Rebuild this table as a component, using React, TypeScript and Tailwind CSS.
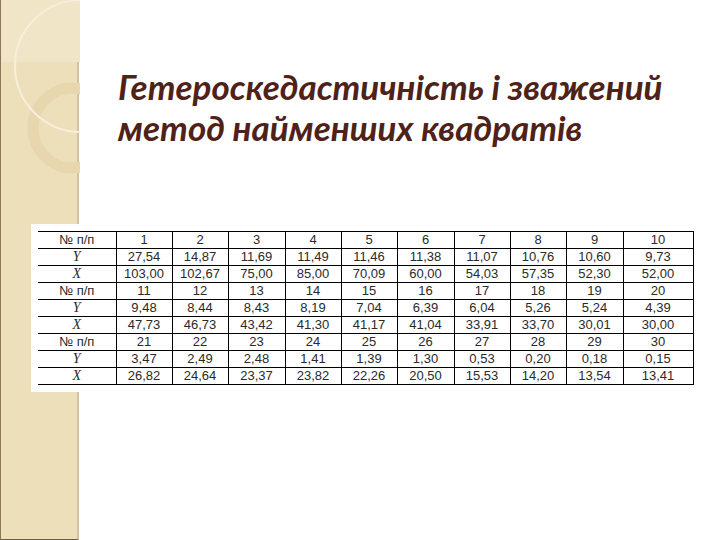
import React from "react";

const rows: { label: string; italic: boolean; cells: string[] }[] = [
  { label: "№ п/п", italic: false, cells: ["1", "2", "3", "4", "5", "6", "7", "8", "9", "10"] },
  { label: "Y", italic: true, cells: ["27,54", "14,87", "11,69", "11,49", "11,46", "11,38", "11,07", "10,76", "10,60", "9,73"] },
  { label: "X", italic: true, cells: ["103,00", "102,67", "75,00", "85,00", "70,09", "60,00", "54,03", "57,35", "52,30", "52,00"] },
  { label: "№ п/п", italic: false, cells: ["11", "12", "13", "14", "15", "16", "17", "18", "19", "20"] },
  { label: "Y", italic: true, cells: ["9,48", "8,44", "8,43", "8,19", "7,04", "6,39", "6,04", "5,26", "5,24", "4,39"] },
  { label: "X", italic: true, cells: ["47,73", "46,73", "43,42", "41,30", "41,17", "41,04", "33,91", "33,70", "30,01", "30,00"] },
  { label: "№ п/п", italic: false, cells: ["21", "22", "23", "24", "25", "26", "27", "28", "29", "30"] },
  { label: "Y", italic: true, cells: ["3,47", "2,49", "2,48", "1,41", "1,39", "1,30", "0,53", "0,20", "0,18", "0,15"] },
  { label: "X", italic: true, cells: ["26,82", "24,64", "23,37", "23,82", "22,26", "20,50", "15,53", "14,20", "13,54", "13,41"] },
];

const colW = [78, 56, 56, 57, 56, 56, 57, 56, 56, 57, 70];

export default function App() {
  return (
    <div className="relative w-[720px] h-[540px] bg-white overflow-hidden">
      {/* decorative side strip */}
      <div className="absolute left-0 top-0 w-[79px] h-[540px] bg-[#eedfbb] border-l border-l-[#8c7558] border-r-2 border-r-[#d3c2a2] border-b border-b-[#6f5a44]">
        <svg width="79" height="540" viewBox="0 0 79 540" className="block">
          <rect x="0" y="0" width="79" height="62" fill="#f1e5c8" />
          <circle cx="72" cy="128" r="40" fill="none" stroke="#e7d6ae" strokeWidth="11" />
          <circle cx="80" cy="66" r="66" fill="none" stroke="#f7eedb" strokeWidth="2" />
        </svg>
      </div>

      <div className="relative flex flex-col">
        <h1
          className="ml-[118px] mt-[66px] text-[35px] leading-[41px] font-bold italic text-[#4e2218]"
          style={{ fontFamily: 'Lato, "Open Sans", sans-serif' }}
        >
          Гетероскедастичність і зважений
          <br />
          метод найменших квадратів
        </h1>

        <div className="ml-[31px] mt-[76px] w-[666px] bg-white pl-[7px] pt-[7px] pb-[7px]">
          <table
            className="table-fixed border-collapse text-[13px] text-[#2a2a2a]"
            style={{ fontFamily: '"Liberation Sans", Arial, sans-serif' }}
          >
            <colgroup>
              {colW.map((w, i) => (
                <col key={i} style={{ width: w }} />
              ))}
            </colgroup>
            <tbody>
              {rows.map((r, i) => (
                <tr key={i} className="h-[17px] border-t border-b border-black">
                  <td
                    className={
                      "p-0 text-center leading-[16px] border-r border-black " +
                      (r.italic ? "italic text-[14px]" : "")
                    }
                    style={r.italic ? { fontFamily: '"Liberation Serif", serif' } : undefined}
                  >
                    {r.label}
                  </td>
                  {r.cells.map((c, j) => (
                    <td key={j} className="p-0 text-center leading-[16px] border-r border-black">
                      {c}
                    </td>
                  ))}
                </tr>
              ))}
            </tbody>
          </table>
        </div>
      </div>
    </div>
  );
}
